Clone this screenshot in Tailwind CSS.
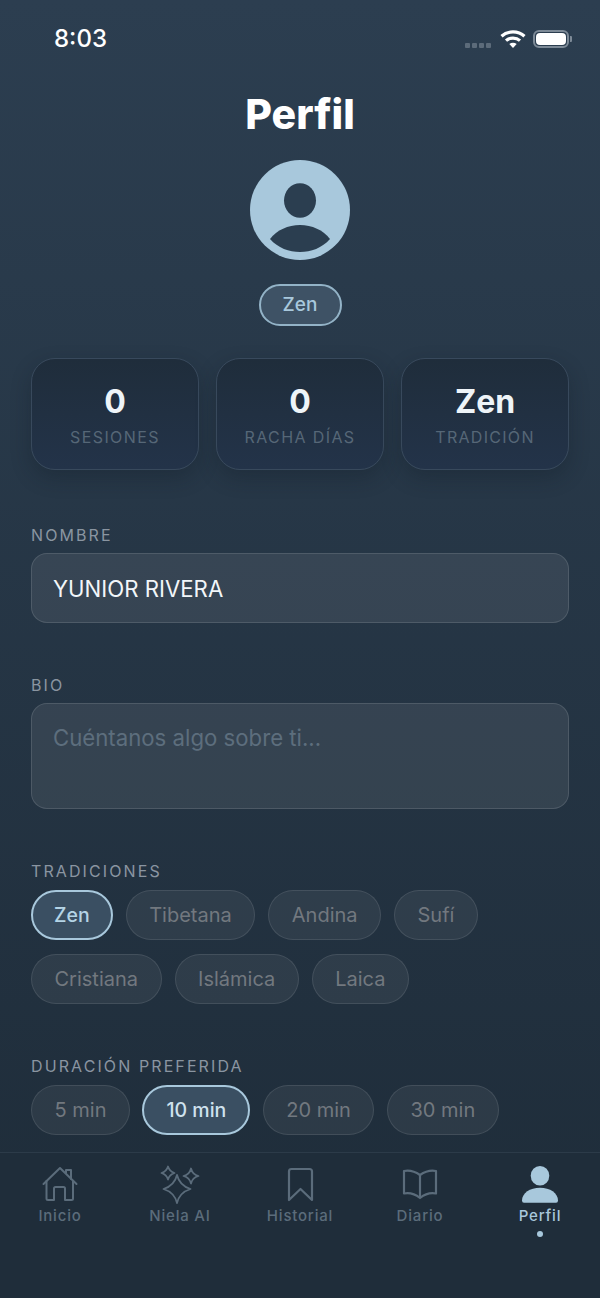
<!DOCTYPE html>
<html lang="es">
<head>
<meta charset="utf-8">
<script src="https://cdn.jsdelivr.net/npm/@tailwindcss/browser@4"></script>
</head>
<body class="m-0">
<div class="w-[600px] h-[1298px] overflow-hidden flex flex-col font-['Inter',sans-serif] bg-gradient-to-b from-[#2c3e50] to-[#1e2c39]">
  <main class="flex-1 min-h-0 flex flex-col px-[31px]">
    <div class="h-[76px] flex items-start justify-between pt-[23px] pl-[23px]">
      <span class="text-[24px] leading-[32px] font-medium text-white">8:03</span>
      <div class="flex items-center mt-[6px] -mr-[3px]">
        <div class="flex gap-[2px] mt-[13px] mr-[9px]">
          <span class="w-[5px] h-[5px] rounded-[1px] bg-[#5c6b7a]"></span><span class="w-[5px] h-[5px] rounded-[1px] bg-[#5c6b7a]"></span><span class="w-[5px] h-[5px] rounded-[1px] bg-[#5c6b7a]"></span><span class="w-[5px] h-[5px] rounded-[1px] bg-[#5c6b7a]"></span>
        </div>
        <svg class="w-[26px] h-[20px] mr-[7px]" viewBox="0 0 26 20" fill="none"><path d="M1.5 7.2C7.8 1.5 18.2 1.5 24.5 7.2" stroke="#fff" stroke-width="3.2"/><path d="M6 11.6C9.8 8.3 16.2 8.3 20 11.6" stroke="#fff" stroke-width="3.2"/><path d="M9.3 15L13 19L16.7 15C14.6 13.3 11.4 13.3 9.3 15Z" fill="#fff"/></svg>
        <div class="w-[36px] h-[18px] rounded-[6px] border-2 border-[#7d8a97] p-[1px]"><div class="w-full h-full rounded-[4px] bg-white"></div></div>
        <div class="w-[2px] h-[6px] ml-[1px] rounded-r-[1px] bg-[#7d8a97]"></div>
      </div>
    </div>
    <h1 class="text-center text-[41px] leading-[48px] font-extrabold text-white mt-[14px]">Perfil</h1>
    <div class="self-center w-[100px] h-[100px] mt-[22px] rounded-full bg-[#a8c8dc] overflow-hidden">
      <svg viewBox="0 0 100 100" class="w-full h-full"><ellipse cx="50" cy="40.5" rx="16" ry="17.2" fill="#2b3e50"/><path d="M20 79C27 70 38 65 50 65C62 65 73 70 80 79C72 88 61 92 50 92C39 92 28 88 20 79Z" fill="#2b3e50"/></svg>
    </div>
    <div class="self-center mt-[24px] h-[42px] w-[83px] pt-[1px] rounded-full border-2 border-[#93b3c7] bg-[#3e5265] flex items-center justify-center text-[19px] font-medium text-[#a8c8dc]">Zen</div>

    <div class="grid grid-cols-3 gap-[17px] mt-[32px]">
      <div class="h-[112px] rounded-[24px] border border-[#38495c] bg-gradient-to-b from-[#1f2d3b] to-[#233349] shadow-[0_8px_20px_rgba(15,25,35,0.3)] flex flex-col items-center">
        <span class="text-[32px] leading-[40px] font-bold text-[#eef4f8] mt-[23px]">0</span>
        <span class="text-[16px] leading-[20px] tracking-[1.4px] text-[#566777] mt-[5px]">SESIONES</span>
      </div>
      <div class="h-[112px] rounded-[24px] border border-[#38495c] bg-gradient-to-b from-[#1f2d3b] to-[#233349] shadow-[0_8px_20px_rgba(15,25,35,0.3)] flex flex-col items-center">
        <span class="text-[32px] leading-[40px] font-bold text-[#eef4f8] mt-[23px]">0</span>
        <span class="text-[16px] leading-[20px] tracking-[1.4px] text-[#566777] mt-[5px]">RACHA DÍAS</span>
      </div>
      <div class="h-[112px] rounded-[24px] border border-[#38495c] bg-gradient-to-b from-[#1f2d3b] to-[#233349] shadow-[0_8px_20px_rgba(15,25,35,0.3)] flex flex-col items-center">
        <span class="text-[32px] leading-[40px] font-bold text-[#eef4f8] mt-[23px]">Zen</span>
        <span class="text-[16px] leading-[20px] tracking-[1.3px] text-[#566777] mt-[5px]">TRADICIÓN</span>
      </div>
    </div>

    <label class="block mt-[55px] text-[16px] leading-[20px] tracking-[2.1px] text-[#8a95a1]">NOMBRE</label>
    <div class="mt-[8px] h-[70px] rounded-[16px] border border-white/[0.12] bg-white/[0.08] flex items-center px-[21px] pt-[1px] text-[22.2px] text-[#f2f6f9]">YUNIOR RIVERA</div>

    <label class="block mt-[52px] text-[16px] leading-[20px] tracking-[2.1px] text-[#8a95a1]">BIO</label>
    <div class="mt-[8px] h-[106px] rounded-[16px] border border-white/[0.12] bg-white/[0.08] px-[21px] pt-[20px] text-[22.2px] leading-[28px] text-[#5d6e7d]">Cuéntanos algo sobre ti...</div>

    <label class="block mt-[52px] text-[16px] leading-[20px] tracking-[2.1px] text-[#8a95a1]">TRADICIONES</label>
    <div class="flex flex-wrap gap-x-[13px] gap-y-[14px] mt-[9px]">
      <span class="h-[50px] px-[21px] pt-[1px] rounded-full border-2 border-[#a8c8dc] bg-[#3a4f62] flex items-center text-[19.5px] font-medium text-[#b4d4e6]">Zen</span>
      <span class="h-[50px] px-[22.5px] rounded-full border border-white/[0.1] bg-white/[0.06] flex items-center text-[20px] text-[#72787f]">Tibetana</span>
      <span class="h-[50px] px-[22.5px] rounded-full border border-white/[0.1] bg-white/[0.06] flex items-center text-[20px] text-[#72787f]">Andina</span>
      <span class="h-[50px] px-[22.5px] rounded-full border border-white/[0.1] bg-white/[0.06] flex items-center text-[20px] text-[#72787f]">Sufí</span>
      <span class="h-[50px] px-[22.5px] rounded-full border border-white/[0.1] bg-white/[0.06] flex items-center text-[20px] text-[#72787f]">Cristiana</span>
      <span class="h-[50px] px-[22.5px] rounded-full border border-white/[0.1] bg-white/[0.06] flex items-center text-[20px] text-[#72787f]">Islámica</span>
      <span class="h-[50px] px-[22.5px] rounded-full border border-white/[0.1] bg-white/[0.06] flex items-center text-[20px] text-[#72787f]">Laica</span>
    </div>

    <label class="block mt-[52px] text-[16px] leading-[20px] tracking-[2.1px] text-[#8a95a1]">DURACIÓN PREFERIDA</label>
    <div class="flex gap-x-[12.5px] mt-[9px]">
      <span class="h-[50px] px-[22.5px] rounded-full border border-white/[0.1] bg-white/[0.06] flex items-center text-[20px] text-[#72787f]">5 min</span>
      <span class="h-[50px] px-[22px] pt-[1px] rounded-full border-2 border-[#a8c8dc] bg-[#3a4f62] flex items-center text-[19.5px] font-medium text-[#cfe2ee]">10 min</span>
      <span class="h-[50px] px-[22.5px] rounded-full border border-white/[0.1] bg-white/[0.06] flex items-center text-[20px] text-[#72787f]">20 min</span>
      <span class="h-[50px] px-[22.5px] rounded-full border border-white/[0.1] bg-white/[0.06] flex items-center text-[20px] text-[#72787f]">30 min</span>
    </div>
  </main>

  <nav class="h-[146px] shrink-0 border-t border-[#2c3b49] bg-[#1f2d3a] grid grid-cols-5 pt-[11px] text-[15px] leading-[20px] font-medium tracking-[0.8px] text-[#5b6c7b]">
    <div class="flex flex-col items-center">
      <svg class="w-[40px] h-[40px]" viewBox="0 0 40 40" fill="none" stroke="#5b6c7b" stroke-width="2" stroke-linejoin="round" stroke-linecap="round"><path d="M3.5 20L20 4L36.5 20"/><path d="M6.5 17V34.5Q6.5 36 8 36H14V24.5Q14 23 15.5 23H23.5Q25 23 25 24.5V36H31.500Q33 36 33 34.5V17"/><path d="M26 9V6H31V15"/></svg>
      <span class="mt-[2px]">Inicio</span>
    </div>
    <div class="flex flex-col items-center">
      <svg class="w-[40px] h-[40px]" viewBox="0 0 40 40" fill="none" stroke="#5b6c7b" stroke-width="1.800" stroke-linejoin="round"><path d="M17 11Q19.500 21.500 30.500 25Q19.500 28.500 17 39Q14.500 28.500 3.500 25Q14.500 21.500 17 11Z"/><path d="M8 2.500Q9.500 7.500 14.500 9Q9.500 10.500 8 15.500Q6.500 10.500 1.500 9Q6.500 7.500 8 2.500Z"/><path d="M31 4.500Q32.500 10.500 38.500 12Q32.500 13.500 31 19.500Q29.500 13.500 23.500 12Q29.500 10.500 31 4.500Z"/></svg>
      <span class="mt-[2px]">Niela AI</span>
    </div>
    <div class="flex flex-col items-center">
      <svg class="w-[40px] h-[40px]" viewBox="0 0 40 40" fill="none" stroke="#5b6c7b" stroke-width="2.200" stroke-linejoin="round"><path d="M9 36V7.500Q9 5 11.500 5H29.500Q32 5 32 7.500V36L20.500 25Z"/></svg>
      <span class="mt-[2px]">Historial</span>
    </div>
    <div class="flex flex-col items-center">
      <svg class="w-[40px] h-[40px]" viewBox="0 0 40 40" fill="none" stroke="#5b6c7b" stroke-width="2.200" stroke-linejoin="round"><path d="M20 11C15 7.500 9 6 4 7V29.500C9 28.500 15 30 20 34C25 30 31 28.500 36 29.500V7C31 6 25 7.500 20 11Z"/><path d="M20 11V33"/></svg>
      <span class="mt-[2px]">Diario</span>
    </div>
    <div class="flex flex-col items-center text-[#a8c8dc]">
      <svg class="w-[40px] h-[40px]" viewBox="0 0 40 40" fill="#a8c8dc"><ellipse cx="20" cy="11.700" rx="9.300" ry="9.800"/><path d="M2 36.500C2 29 10 23.700 20 23.700C30 23.700 38 29 38 36.500Q38 38.700 36 38.700H4Q2 38.700 2 36.500Z"/></svg>
      <span class="mt-[2px]">Perfil</span>
      <span class="w-[6px] h-[6px] mt-[5px] rounded-full bg-[#a8c8dc]"></span>
    </div>
  </nav>
</div>
</body>
</html>
